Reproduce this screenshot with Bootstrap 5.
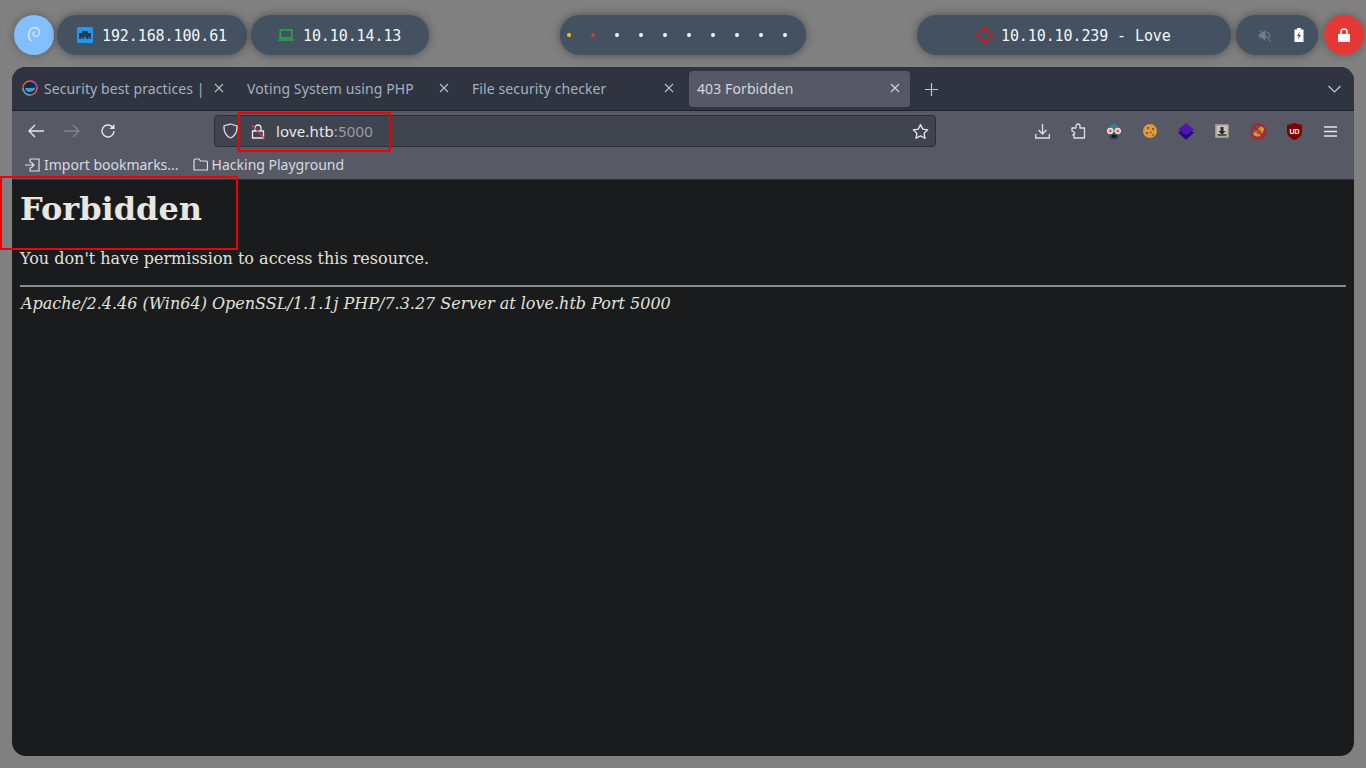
<!DOCTYPE html>
<html lang="en">
<head>
<meta charset="utf-8">
<title>403 Forbidden</title>
<link href="https://cdn.jsdelivr.net/npm/bootstrap@5.3.0/dist/css/bootstrap.min.css" rel="stylesheet">
<style>
html,body{height:768px;overflow:hidden}
body{background:#808080;position:relative}
.topbar{height:67px;padding:15px 2px 12px 14px}
.pill{height:40px;border-radius:20px;background:#435160;box-shadow:0 0 10px rgba(0,0,0,.4);color:#f4f6f8;font:15px/40px "DejaVu Sans Mono","Liberation Mono",monospace;letter-spacing:-.1px}
.pill .txt{margin-left:1px;margin-top:2px}
.round{width:40px;border-radius:50%;box-shadow:0 0 8px rgba(0,0,0,.3)}
.deb{background:#82bfff}
.lockb{background:#e53935}
.p1{width:190px;margin-left:3px;padding-left:20px}
.p2{width:178px;margin-left:4px;padding-left:27px}
.p3{width:246px;margin-left:131px;padding-left:7px;gap:20px}
.p4{width:314px;padding-left:59px}
.p4 .txt{margin-left:0}
.p5{width:82px;margin-left:5px;padding:0 14px 0 23px}
.lockb{margin-left:6px}
.dot{width:4px;height:4px;border-radius:50%;background:#f4f6f8}
.win{height:689px;margin:0 12px;border-radius:14px;overflow:hidden;background:#1a1b1d}
.tabs{height:44px;background:#2f3440;border-bottom:1px solid #1e2026;padding:4px 0 3px 2px;font:14px "Noto Sans",sans-serif;color:#a5b0c0;letter-spacing:.1px}
.tabx{width:225px;height:36px;padding:0 0 2px 8px;border-radius:4px;position:relative;white-space:nowrap}
.tabx .lbl{flex:1}
.tabx .cl{flex:none;margin:0 15px 0 6px}
.tabx.first .lbl{margin-left:6px}
.tabx.on{width:221px;background:#565866;color:#d4d6de}
.tabx.on .cl{margin-right:10px}
.plus{margin-left:15px}
.chev{margin-left:auto;margin-right:13px}
.tools{height:40px;background:#575965;padding:0 0 0 15px}
.tools svg{flex:none}
.back-ic{margin-right:18px}
.fwd-ic{margin-right:19px}
.tbtn{width:36px;display:flex;justify-content:center}
.urlb{width:722px;height:32px;margin-left:98px;background:#3f444f;border:1px solid #2c2f38;border-radius:4px;padding:0 6px 0 8px;font:15px "Noto Sans",sans-serif;letter-spacing:.15px;color:#e7e9ee}
.urlb .port{color:#9a9ca6}
.lock-ic{margin:0 11px 0 13px}
.exts{margin-left:88px}
.marks{height:29px;background:#575965;border-bottom:1px solid #33353c;padding:0 0 1px 13px;font:14px "Noto Sans",sans-serif;color:#d8dae2}
.fold-ic{margin:0 4px 0 14px}
.pg{background:#1a1b1d;color:#e3e1dc;font-family:"DejaVu Serif",serif;padding:0 8px}
.pg h1{font:bold 32px/37px "DejaVu Serif",serif;margin:0;padding-top:11px;color:#e8e6e1}
.pg p{font:16px/19px "DejaVu Serif",serif;margin:0;padding-top:21px}
.pg hr{margin:17px 0 0;border:0;border-top:2px solid #8a8a8a;opacity:1}
.pg address{font:italic 16px/19px "DejaVu Serif",serif;margin:0;padding:7px 0 0 1px}
.mark1,.mark2{position:absolute;border:2px solid #f00000;pointer-events:none}
.mark1{left:238px;top:112px;width:153px;height:40px}
.mark2{left:0;top:176px;width:238px;height:74px}
</style>
</head>
<body>
<div class="topbar d-flex">
  <div class="pill round deb d-flex align-items-center justify-content-center">
    <svg width="16" height="20" viewBox="0 0 16 20" fill="none" stroke="#e8f3ff" stroke-width="1.2" stroke-linecap="round"><path d="M5 15.500C1.500 12.500 1.500 5 7 3c4-1.200 7 1.500 6.500 5C13 11 10.500 12 8.500 11 6.500 10 6.500 7.500 8.500 6.800"/></svg>
  </div>
  <div class="pill p1 d-flex align-items-center">
    <svg class="me-2" width="16" height="16" viewBox="0 0 16 16"><rect width="16" height="16" rx="1.500" fill="#2196f3"/><path d="M2 12V6h3V4h6v2h3v6h-1.500v-2h-1v2H9v-2H7v2H5.500v-2h-1v2z" fill="#283a4d"/></svg>
    <span class="txt">192.168.100.61</span>
  </div>
  <div class="pill p2 d-flex align-items-center">
    <svg class="me-2" width="16" height="12" viewBox="0 0 16 12" fill="none" stroke="#22b14c" stroke-width="1.400"><rect x="2.200" y="1" width="11.600" height="8"/><path d="M0 11h16"/></svg>
    <span class="txt">10.10.14.13</span>
  </div>
  <div class="pill p3 d-flex align-items-center">
    <span class="dot bg-warning"></span><span class="dot bg-danger"></span><span class="dot"></span><span class="dot"></span><span class="dot"></span><span class="dot"></span><span class="dot"></span><span class="dot"></span><span class="dot"></span><span class="dot"></span>
  </div>
  <div class="pill p4 d-flex align-items-center ms-auto">
    <svg class="me-2" width="17" height="17" viewBox="0 0 17 17" fill="none" stroke="#e3170f" stroke-width="1.400"><circle cx="8.500" cy="8.500" r="5.800"/><path d="M8.500 0v4M8.500 13v4M0 8.500h4M13 8.500h4" stroke-width="1.600"/><path d="M7 7.500h.9M9.100 7.500h.9M7 9.700h.9M9.100 9.700h.9" stroke-width="1"/></svg>
    <span class="txt">10.10.10.239 - Love</span>
  </div>
  <div class="pill p5 d-flex align-items-center justify-content-between">
    <svg width="13" height="13" viewBox="0 0 13 13" fill="#737d87"><path d="M0 4.500h2.500L6.500 1v11L2.500 8.500H0z"/><path d="M8 3.500c2 1 3 4 .5 6.500l.7.8c3-3 2-7-.5-8.300zM1 .7 12 12l-.7.7L.3 1.400z"/></svg>
    <svg width="10" height="14" viewBox="0 0 10 14"><path d="M3 0h4v1.500h2.500V14H.5V1.500H3z" fill="#fff"/><path d="M6 3.500 3 8h1.800L4 11.500 7 7H5.200z" fill="#435160"/></svg>
  </div>
  <div class="pill round lockb d-flex align-items-center justify-content-center">
    <svg width="12" height="14" viewBox="0 0 12 14" fill="#fff"><path d="M0 6h12v8H0z"/><path d="M2.200 6.500V4a3.800 3.800 0 0 1 7.600 0v2.500H8.200V4a2.200 2.200 0 0 0-4.400 0v2.500z"/></svg>
  </div>
</div>

<main class="win">
  <div class="tabs d-flex align-items-center">
    <div class="tabx first d-flex align-items-center">
      <svg width="16" height="16" viewBox="0 0 16 16" class="flex-shrink-0"><circle cx="8" cy="8" r="7" fill="#1c2a3a" stroke="#e0623a" stroke-width="1.500"/><path d="M8 1a7 7 0 0 1 7 7" fill="none" stroke="#8c4fc0" stroke-width="1.500"/><path d="M1 8a7 7 0 0 0 7 7" fill="none" stroke="#3fa7d6" stroke-width="1.500"/><path d="M3 8h8.500c1 0 1.500-1 2-1 0 2-2 5-6 5-2.500 0-4-2-4.500-4z" fill="#3d9be0"/></svg>
      <span class="lbl">Security best practices |</span>
      <svg class="cl" width="10" height="10" viewBox="0 0 10 10" stroke="#b6bcc8" stroke-width="1.100"><path d="M1 1l8 8M9 1L1 9"/></svg>
    </div>
    <div class="tabx d-flex align-items-center">
      <span class="lbl">Voting System using PHP</span>
      <svg class="cl" width="10" height="10" viewBox="0 0 10 10" stroke="#b6bcc8" stroke-width="1.100"><path d="M1 1l8 8M9 1L1 9"/></svg>
    </div>
    <div class="tabx d-flex align-items-center">
      <span class="lbl">File security checker</span>
      <svg class="cl" width="10" height="10" viewBox="0 0 10 10" stroke="#b6bcc8" stroke-width="1.100"><path d="M1 1l8 8M9 1L1 9"/></svg>
    </div>
    <div class="tabx on d-flex align-items-center">
      <span class="lbl">403 Forbidden</span>
      <svg class="cl" width="10" height="10" viewBox="0 0 10 10" stroke="#d0d3da" stroke-width="1.100"><path d="M1 1l8 8M9 1L1 9"/></svg>
    </div>
    <svg class="plus" width="13" height="13" viewBox="0 0 13 13" stroke="#c4c8d2" stroke-width="1.200"><path d="M6.500 0v13M0 6.500h13"/></svg>
    <svg class="chev" width="13" height="8" viewBox="0 0 13 8" fill="none" stroke="#c4c8d2" stroke-width="1.200"><path d="M.5 1l6 6 6-6"/></svg>
  </div>

  <div class="tools d-flex align-items-center">
    <svg width="18" height="14" class="back-ic" viewBox="0 0 18 14" fill="none" stroke="#e4e6ec" stroke-width="1.400"><path d="M17 7H2M8 1 2 7l6 6"/></svg>
    <svg width="18" height="14" class="fwd-ic" viewBox="0 0 18 14" fill="none" stroke="#85878f" stroke-width="1.400"><path d="M1 7h15M10 1l6 6-6 6"/></svg>
    <svg width="16" height="16" viewBox="0 0 16 16" fill="none" stroke="#e4e6ec" stroke-width="1.400"><path d="M14 8a6 6 0 1 1-1.800-4.300L14 5.500"/><path d="M14.500 1v5h-5" stroke="none" fill="#e4e6ec"/></svg>
    <div class="urlb d-flex align-items-center">
      <svg width="15" height="16" viewBox="0 0 15 16" fill="none" stroke="#dfe1e7" stroke-width="1.300"><path d="M7.500 1 14 3c.3 6-2 10-6.500 12C3 13 .7 9 1 3z"/></svg>
      <svg class="lock-ic" width="14" height="15" viewBox="0 0 14 15" fill="none" stroke="#e8e9ee" stroke-width="1.300"><path d="M1.500 7h11v7h-11zM4 7V4a3 3 0 0 1 6 0v3"/><path d="M1 1l12 13" stroke="#e0345a"/></svg>
      <span>love.htb<span class="port">:5000</span></span>
      <svg class="ms-auto" width="17" height="17" viewBox="0 0 17 17" fill="none" stroke="#e4e6ec" stroke-width="1.300"><path d="M8.500 1.500l2.200 4.600 5 .7-3.600 3.500.9 5-4.500-2.400L4 15.300l.9-5L1.300 6.800l5-.7z" stroke-linejoin="round"/></svg>
    </div>
    <div class="exts d-flex align-items-center">
      <div class="tbtn"><svg width="15" height="15" viewBox="0 0 15 15" fill="none" stroke="#dfe1e7" stroke-width="1.300"><path d="M7.500 0v9.500M3.500 6l4 4 4-4M.7 10v4h13.600v-4"/></svg></div>
      <div class="tbtn"><svg width="15" height="16" viewBox="0 0 15 16" fill="none" stroke="#dfe1e7" stroke-width="1.300"><path d="M1 5h4V3a2 2 0 0 1 4 0v2h4.500v10H3v-3H1.800l2-1.500L3 9 1 8z" stroke-linejoin="round"/></svg></div>
      <div class="tbtn"><svg width="16" height="16" viewBox="0 0 16 16"><path d="M3 7 4 2.500 8 0l4 2.500L13 7z" fill="#2f7f8c"/><path d="M3 9h10l-1 7H4z" fill="#1e4d58"/><circle cx="4.300" cy="8" r="2.900" fill="#f3b6ae" stroke="#e8e8e8"/><circle cx="11.700" cy="8" r="2.900" fill="#f3b6ae" stroke="#e8e8e8"/><circle cx="4.300" cy="8" r="1.100" fill="#c9432f"/><circle cx="11.700" cy="8" r="1.100" fill="#c9432f"/><path d="M6 12h4v2.500H6z" fill="#111"/></svg></div>
      <div class="tbtn"><svg width="16" height="16" viewBox="0 0 16 16"><circle cx="8" cy="8" r="7" fill="#e0993c"/><circle cx="6" cy="5" r="1" fill="#6e3f16"/><circle cx="11" cy="6" r="1" fill="#6e3f16"/><circle cx="5" cy="10" r="1" fill="#6e3f16"/><circle cx="9" cy="9.500" r=".8" fill="#6e3f16"/><circle cx="11" cy="12" r=".8" fill="#6e3f16"/></svg></div>
      <div class="tbtn"><svg width="18" height="17" viewBox="0 0 18 17"><path d="M9 4 17 9.500 9 17 1 9.500z" fill="#2a0a80"/><path d="M9 0l8 6.500L9 12 1 6.500z" fill="#4a1ab0"/></svg></div>
      <div class="tbtn"><svg width="14" height="14" viewBox="0 0 14 14"><rect width="14" height="14" rx="1" fill="#9c958b"/><rect x="1.500" y="1.500" width="11" height="11" fill="#c9c4bb"/><path d="M5.500 3h3v4h2l-3.500 4L3.500 7h2z" fill="#2c2c2c"/><path d="M2.500 10h9v2h-9z" fill="#555"/></svg></div>
      <div class="tbtn"><svg width="17" height="17" viewBox="0 0 17 17"><path d="M3 11 10 4c3-1 4 1 4 3l-4 6c-3 1-6 0-7-2z" fill="#e8912c"/><path d="M6 9l3 2M9 6l2 3" stroke="#8c4a10"/><circle cx="8.500" cy="8.500" r="7.300" fill="none" stroke="#c8161d" stroke-width="1.600"/><path d="M3.500 3.500l10 10" stroke="#c8161d" stroke-width="1.600"/></svg></div>
      <div class="tbtn"><svg width="15" height="17" viewBox="0 0 15 17"><path d="M7.500 0 15 2v7c0 4-3.500 6.500-7.500 8C3.500 15.500 0 13 0 9V2z" fill="#800000"/><text x="7.500" y="10.500" text-anchor="middle" font-family="Liberation Sans,sans-serif" font-size="7" font-weight="700" fill="#fff">UD</text></svg></div>
      <div class="tbtn"><svg width="13" height="11" viewBox="0 0 13 11" stroke="#e4e6ec" stroke-width="1.300"><path d="M0 1h13M0 5.500h13M0 10h13"/></svg></div>
    </div>
  </div>

  <div class="marks d-flex align-items-center">
    <svg class="me-1" width="15" height="14" viewBox="0 0 15 14" fill="none" stroke="#dfe1e7" stroke-width="1.200"><path d="M5 1h9v12H5V9.500M5 4.500V1M0 7h9M6 4l3 3-3 3"/></svg>
    <span>Import bookmarks...</span>
    <svg class="fold-ic" width="15" height="13" viewBox="0 0 15 13" fill="none" stroke="#dfe1e7" stroke-width="1.200"><path d="M1 2.500a1.500 1.500 0 0 1 1.500-1.500H6l1.500 2H13a1.500 1.500 0 0 1 1.500 1.500V12H1z"/></svg>
    <span>Hacking Playground</span>
  </div>

  <div class="pg">
    <h1>Forbidden</h1>
    <p>You don't have permission to access this resource.</p>
    <hr>
    <address>Apache/2.4.46 (Win64) OpenSSL/1.1.1j PHP/7.3.27 Server at love.htb Port 5000</address>
  </div>
</main>
<div class="mark1"></div>
<div class="mark2"></div>
</body>
</html>
